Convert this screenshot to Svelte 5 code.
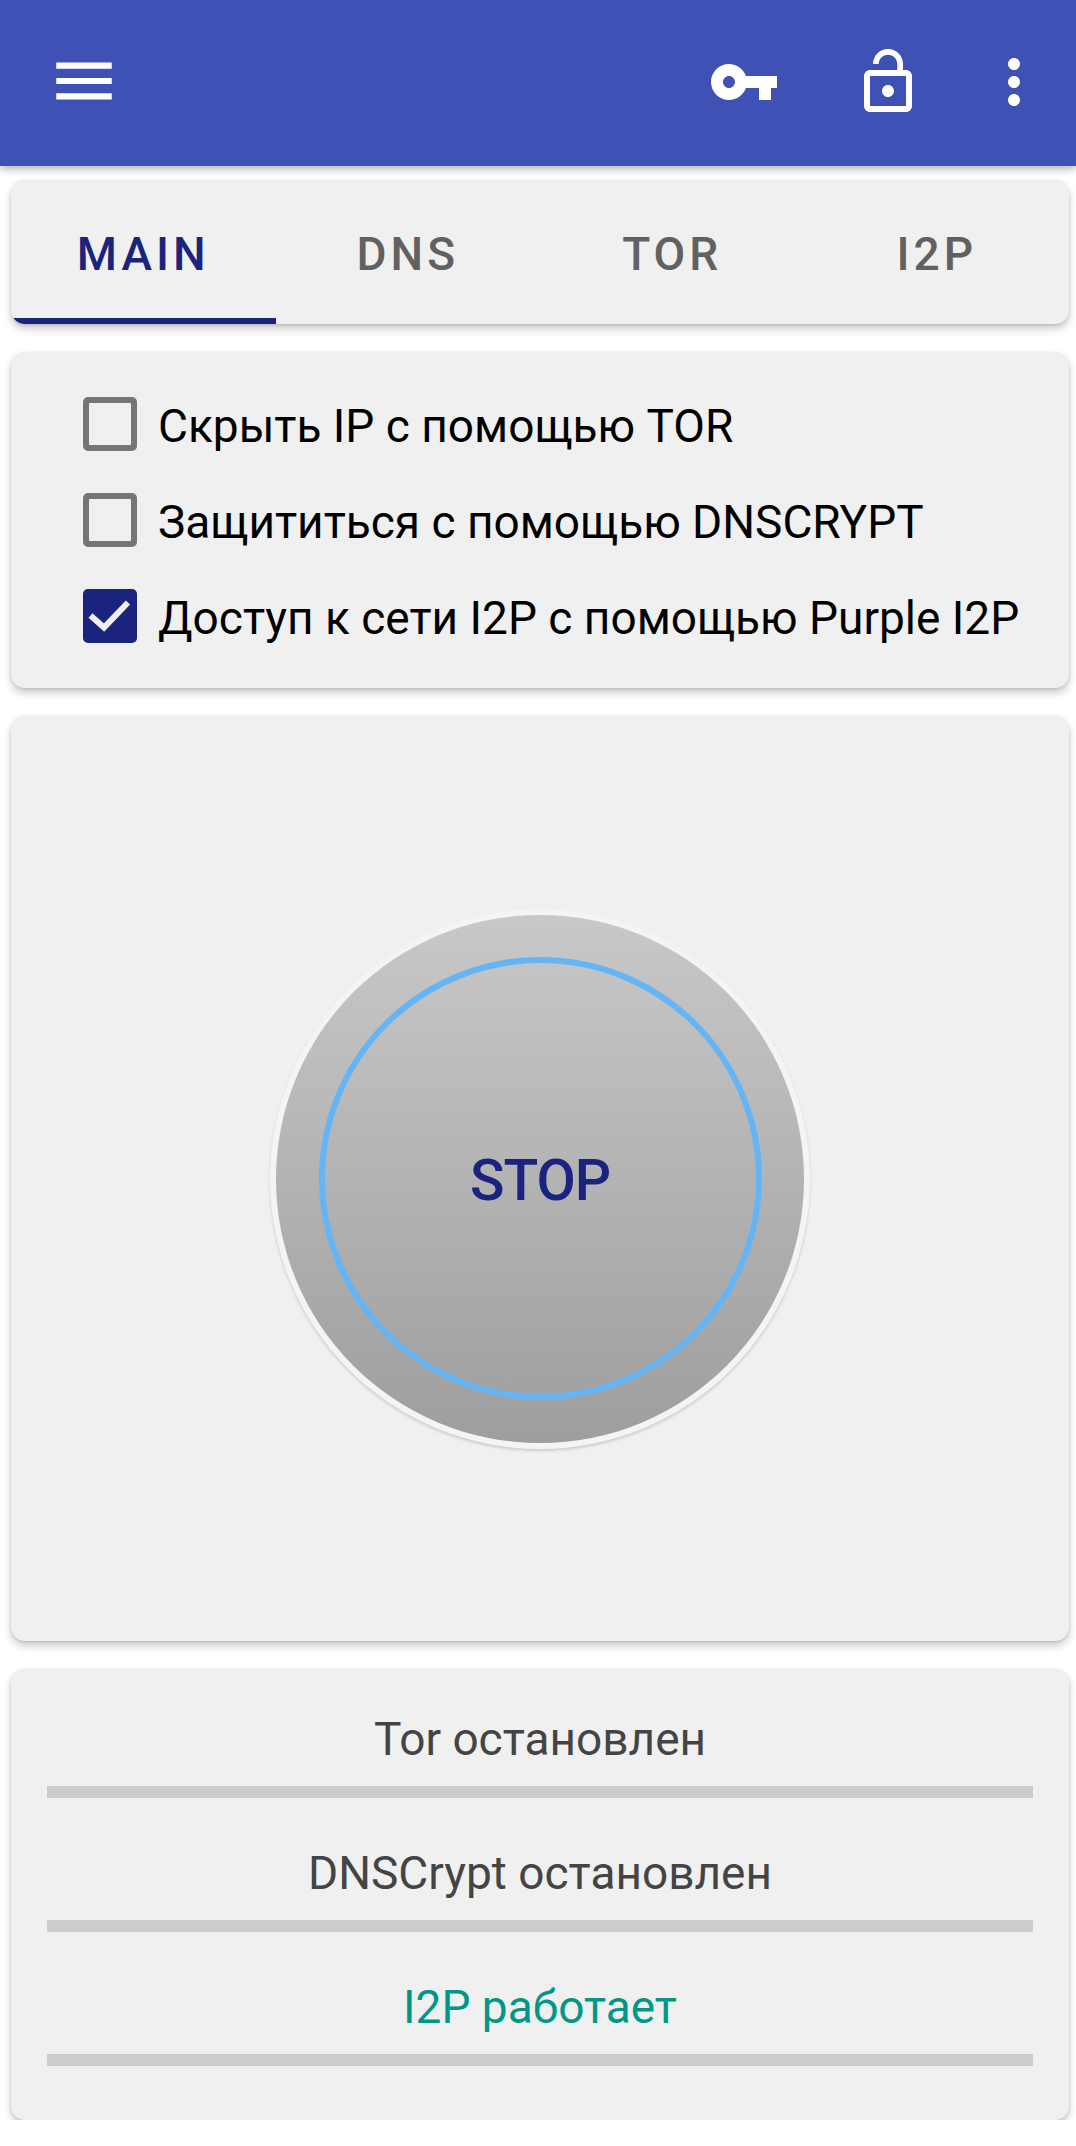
<script>
   const tabs = ["MAIN", "DNS", "TOR", "I2P"];
   const options = [
      { label: "Скрыть IP с помощью TOR", checked: false },
      { label: "Защититься с помощью DNSCRYPT", checked: false },
      { label: "Доступ к сети I2P с помощью Purple I2P", checked: true }
   ];
   const statuses = [
      { label: "Tor остановлен", running: false },
      { label: "DNSCrypt остановлен", running: false },
      { label: "I2P работает", running: true }
   ];
</script>

<header class="toolbar">
   <svg class="icon menu" viewBox="0 0 24 24"><path d="M3 18h18v-2H3v2zm0-5h18v-2H3v2zm0-7v2h18V6H3z" /></svg>
   <svg class="icon key" viewBox="0 0 24 24"><path d="M12.65 10C11.83 7.67 9.61 6 7 6c-3.31 0-6 2.69-6 6s2.69 6 6 6c2.61 0 4.83-1.67 5.65-4H17v4h4v-4h2v-4H12.65zM7 14c-1.1 0-2-.9-2-2s.9-2 2-2 2 .9 2 2-.9 2-2 2z" /></svg>
   <svg class="icon lock" viewBox="0 0 24 24"><path d="M12 17c1.1 0 2-.9 2-2s-.9-2-2-2-2 .9-2 2 .9 2 2 2zm6-9h-1V6c0-2.76-2.24-5-5-5S7 3.24 7 6h1.9c0-1.71 1.39-3.1 3.1-3.1 1.71 0 3.1 1.39 3.1 3.1v2H6c-1.1 0-2 .9-2 2v10c0 1.1.9 2 2 2h12c1.1 0 2-.9 2-2V10c0-1.1-.9-2-2-2zm0 12H6V10h12v10z" /></svg>
   <svg class="icon more" viewBox="0 0 24 24"><path d="M12 8c1.1 0 2-.9 2-2s-.9-2-2-2-2 .9-2 2 .9 2 2 2zm0 2c-1.1 0-2 .9-2 2s.9 2 2 2 2-.9 2-2-.9-2-2-2zm0 6c-1.1 0-2 .9-2 2s.9 2 2 2 2-.9 2-2-.9-2-2-2z" /></svg>
</header>

<main class="content">
   <nav class="card tabs">
      {#each tabs as tab, i}
         <div class="tab" class:active={i === 0}>{tab}</div>
      {/each}
   </nav>

   <section class="card options">
      {#each options as option}
         <div class="option">
            <span class="checkbox" class:checked={option.checked}>
               {#if option.checked}
                  <svg viewBox="0 0 54 54"><path d="M7.5 26.5 L21 38.5 L45 13.5" /></svg>
               {/if}
            </span>
            <span class="option-label">{option.label}</span>
         </div>
      {/each}
   </section>

   <section class="card power">
      <div class="button-edge">
         <div class="button">
            <div class="ring">STOP</div>
         </div>
      </div>
   </section>

   <section class="card statuses">
      {#each statuses as status}
         <div class="status" class:running={status.running}>{status.label}</div>
      {/each}
   </section>
</main>

<style>
:global(body) {
   background-color: #fff;
   font-family: Roboto, "Noto Sans", sans-serif;
}
.toolbar {
   display: flex;
   align-items: center;
   height: 166px;
   padding: 0 26px 0 47px;
   background-color: #3f51b5;
   box-shadow: 0 3px 8px rgba(0, 0, 0, 0.3);
}
.icon {
   width: 72px;
   height: 72px;
   margin-top: -2px;
   fill: #fff;
   flex: none;
}
.menu {
   width: 74px;
   height: 74px;
   margin-top: -5px;
   margin-right: auto;
}
.key {
   margin-right: 72px;
}
.lock {
   margin-right: 54px;
}
.content {
   display: flex;
   flex-direction: column;
   gap: 28px;
   padding: 14px 7px 0 11px;
}
.card {
   background-color: #f0f0f0;
   border-radius: 14px;
   box-shadow: 0 5px 9px rgba(0, 0, 0, 0.2), 0 1px 3px rgba(0, 0, 0, 0.12);
}
.tabs {
   display: grid;
   grid-template-columns: repeat(4, 1fr);
   height: 144px;
   overflow: hidden;
}
.tab {
   display: flex;
   justify-content: center;
   align-items: center;
   padding-top: 9px;
   border-bottom: 6px solid transparent;
   font-size: 46px;
   font-weight: 500;
   letter-spacing: 4px;
   color: #616161;
}
.tab.active {
   color: #1a237e;
   border-bottom-color: #1a237e;
}
.options {
   padding: 24px 0 24px 72px;
}
.option {
   display: flex;
   align-items: center;
   gap: 21px;
   height: 96px;
   font-size: 46px;
   color: #000;
   white-space: nowrap;
}
.option-label {
   margin-top: 3px;
}
.checkbox {
   box-sizing: border-box;
   width: 54px;
   height: 54px;
   flex: none;
   border: 6px solid #757575;
   border-radius: 5px;
}
.checkbox.checked {
   border: none;
   background-color: #1a237e;
}
.checkbox svg {
   display: block;
   fill: none;
   stroke: #efefef;
   stroke-width: 6;
}
.power {
   display: flex;
   justify-content: center;
   align-items: center;
   height: 925px;
}
.button-edge {
   padding: 6px;
   border-radius: 50%;
   background-color: #f4f4f4;
   box-shadow: 0 2px 3px rgba(0, 0, 0, 0.15);
}
.button {
   display: flex;
   justify-content: center;
   align-items: center;
   width: 528px;
   height: 528px;
   border-radius: 50%;
   background: linear-gradient(#c8c8c8, #9e9e9e);
}
.ring {
   box-sizing: border-box;
   display: flex;
   justify-content: center;
   align-items: center;
   width: 443px;
   height: 443px;
   padding-top: 4px;
   border: 6px solid #64b5f6;
   border-radius: 50%;
   font-size: 57px;
   font-weight: 500;
   letter-spacing: -1px;
   color: #1a237e;
}
.statuses {
   padding: 0 36px 54px;
}
.status {
   padding: 47px 0 19px;
   line-height: 56px;
   border-bottom: 12px solid #ccc;
   font-size: 46px;
   text-align: center;
   color: #444;
}
.status:first-child {
   padding-top: 42px;
}
.status.running {
   color: #009688;
}
</style>
